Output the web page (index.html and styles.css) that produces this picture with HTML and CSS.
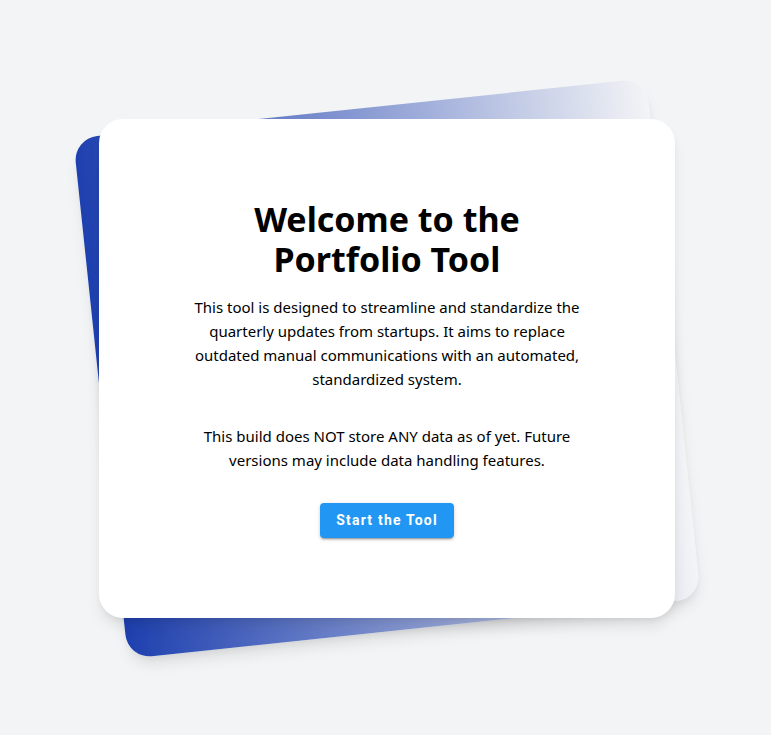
FILE: index.html
```html
<!DOCTYPE html>
<html lang="en">
<head>
<meta charset="utf-8">
<title>Portfolio Tool</title>
<link rel="stylesheet" href="styles.css">
</head>
<body>
  <main class="page">
    <div class="stage">
      <div class="stage-back"></div>
      <section class="card">
        <h1 class="card-title">Welcome to the Portfolio Tool</h1>
        <p class="card-text">This tool is designed to streamline and standardize the quarterly updates from startups. It aims to replace outdated manual communications with an automated, standardized system.</p>
        <p class="card-text card-note">This build does NOT store ANY data as of yet. Future versions may include data handling features.</p>
        <button class="start-button" type="button">Start the Tool</button>
      </section>
    </div>
  </main>
</body>
</html>
```

FILE: styles.css
```css
* {
  box-sizing: border-box;
}

html, body {
  margin: 0;
  padding: 0;
}

body {
  background: #f3f4f6;
  font-family: "Noto Sans", "Open Sans", sans-serif;
  color: #000;
}

.page {
  min-height: 100vh;
  display: flex;
  flex-direction: column;
  justify-content: center;
  padding: 50px 0 48px 3px;
}

.stage {
  position: relative;
  width: 576px;
  margin: 0 auto;
  padding: 12px 0;
}

.stage-back {
  position: absolute;
  inset: 0;
  border-radius: 24px;
  background: linear-gradient(to right, #1e40af, #f3f4f6);
  box-shadow: 0 10px 15px -3px rgba(0, 0, 0, 0.1), 0 4px 6px -2px rgba(0, 0, 0, 0.05);
  transform: rotate(-6deg);
}

.card {
  position: relative;
  background: #fff;
  border-radius: 24px;
  box-shadow: 0 10px 15px -3px rgba(0, 0, 0, 0.1), 0 4px 6px -2px rgba(0, 0, 0, 0.05);
  padding: 80px;
  text-align: center;
  display: flex;
  flex-direction: column;
  align-items: center;
}

.card-title {
  margin: 0 0 16px;
  max-width: 360px;
  font-size: 34px;
  line-height: 40px;
  font-weight: 700;
}

.card-text {
  margin: 0;
  font-size: 15px;
  line-height: 24px;
}

.card-note {
  margin-top: 33px;
}

.start-button {
  margin-top: 31px;
  border: 0;
  border-radius: 4px;
  background: #2196f3;
  color: #fff;
  font-family: Roboto, "Noto Sans", sans-serif;
  font-weight: 700;
  font-size: 14px;
  line-height: 23px;
  letter-spacing: 1.2px;
  padding: 6px 16px;
  box-shadow: 0 3px 1px -2px rgba(0, 0, 0, 0.2), 0 2px 2px 0 rgba(0, 0, 0, 0.14), 0 1px 5px 0 rgba(0, 0, 0, 0.12);
  cursor: pointer;
}
```
